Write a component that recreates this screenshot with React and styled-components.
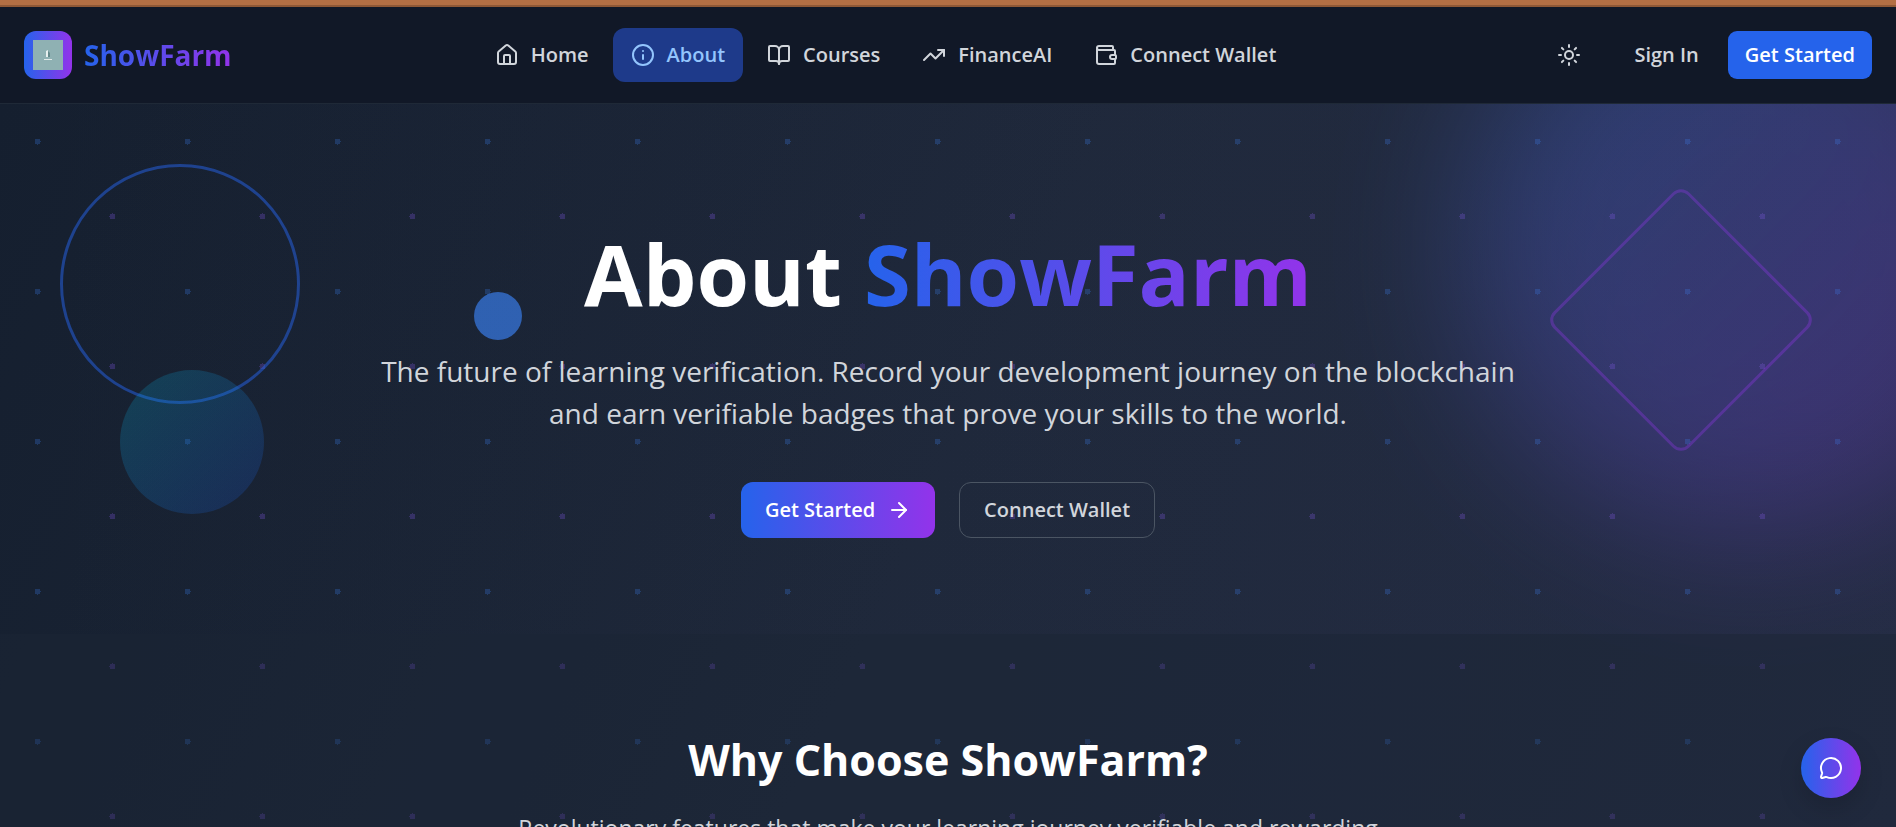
import React from 'react';
import styled, { createGlobalStyle } from 'styled-components';
import {
  ArrowRight,
  BookOpen,
  House,
  Info,
  MessageCircle,
  Sun,
  TrendingUp,
  Wallet,
} from 'lucide-react';

const GlobalStyle = createGlobalStyle`
  * {
    box-sizing: border-box;
  }
  body {
    margin: 0;
    background: #111827;
    color: #d1d5db;
    font-family: 'Segoe UI', 'Open Sans', 'Noto Sans', sans-serif;
    font-size: 20px;
    line-height: 28px;
  }
  button {
    font: inherit;
    cursor: pointer;
  }
`;

const links = [
  { label: 'Home', icon: House },
  { label: 'About', icon: Info, active: true },
  { label: 'Courses', icon: BookOpen },
  { label: 'FinanceAI', icon: TrendingUp },
  { label: 'Connect Wallet', icon: Wallet },
];

const App = () => (
  <Page>
    <GlobalStyle />
    <TopStrip />
    <Header>
      <Brand href="#home">
        <LogoBox>
          <svg width="30" height="30" viewBox="0 0 30 30" aria-hidden="true">
            <rect width="30" height="30" fill="#8fb1b3" />
            <path d="M13 17V11l2-1v7z" fill="#e8f0ef" />
            <path d="M15 11l2 2v4h-2z" fill="#64898b" />
            <path d="M11 19.5h8" stroke="#dfe9e8" strokeWidth="1" />
          </svg>
        </LogoBox>
        <BrandName>ShowFarm</BrandName>
      </Brand>
      <Nav>
        {links.map(({ label, icon: Icon, active }) => (
          <NavLink key={label} href="#" $active={active}>
            <Icon size={24} />
            {label}
          </NavLink>
        ))}
      </Nav>
      <Actions>
        <IconButton aria-label="Toggle theme">
          <Sun size={24} />
        </IconButton>
        <Auth>
          <AuthButton>Sign In</AuthButton>
          <AuthButton $primary>Get Started</AuthButton>
        </Auth>
      </Actions>
    </Header>
    <Main>
      <Backdrop aria-hidden="true">
        <Glow />
        <Dots />
        <Ring />
        <Disc />
        <Ball />
        <Diamond />
      </Backdrop>
      <Hero>
        <Title>
          About <GradientText>ShowFarm</GradientText>
        </Title>
        <Lead>
          The future of learning verification. Record your development journey
          on the blockchain and earn verifiable badges that prove your skills
          to the world.
        </Lead>
        <Buttons>
          <CtaButton $primary>
            Get Started
            <ArrowRight size={24} />
          </CtaButton>
          <CtaButton>Connect Wallet</CtaButton>
        </Buttons>
      </Hero>
      <Features>
        <h2>Why Choose ShowFarm?</h2>
        <p>
          Revolutionary features that make your learning journey verifiable and
          rewarding
        </p>
      </Features>
    </Main>
    <ChatButton aria-label="Open chat">
      <MessageCircle size={24} />
    </ChatButton>
  </Page>
);

const brandGradient = 'linear-gradient(to right, #2563eb, #9333ea)';

const Page = styled.div`
  display: flex;
  flex-direction: column;
  height: 100vh;
`;

const TopStrip = styled.div`
  flex: none;
  height: 7px;
  background: #b36f44;
  border-bottom: 2px solid #8f5836;
`;

const Header = styled.header`
  flex: none;
  display: flex;
  align-items: center;
  justify-content: space-between;
  padding: 21px 24px;
  background: #111827;
  border-bottom: 1px solid #1f2937;
  font-weight: 600;
`;

const Brand = styled.a`
  display: flex;
  align-items: center;
  gap: 12px;
  text-decoration: none;
`;

const LogoBox = styled.span`
  display: flex;
  align-items: center;
  justify-content: center;
  width: 48px;
  height: 48px;
  border-radius: 12px;
  background: ${brandGradient};
`;

const GradientText = styled.span`
  background: ${brandGradient};
  background-clip: text;
  -webkit-background-clip: text;
  color: transparent;
`;

const BrandName = styled(GradientText)`
  font-size: 28px;
  font-weight: 700;
  line-height: 40px;
`;

const Nav = styled.nav`
  display: flex;
  gap: 6px;
`;

const NavLink = styled.a`
  display: flex;
  align-items: center;
  gap: 12px;
  padding: 13px 18px;
  border-radius: 12px;
  text-decoration: none;
  color: ${({ $active }) => ($active ? '#93c5fd' : '#d1d5db')};
  background: ${({ $active }) => ($active ? '#1e3a8a' : 'transparent')};
`;

const Actions = styled.div`
  display: flex;
  align-items: center;
  gap: 18px;
`;

const Auth = styled.div`
  display: flex;
  gap: 12px;
`;

const IconButton = styled.button`
  display: flex;
  padding: 12px 18px;
  border: none;
  background: none;
  color: #d1d5db;
`;

const AuthButton = styled.button`
  padding: 10px 17px;
  border: none;
  border-radius: 9px;
  color: ${({ $primary }) => ($primary ? '#fff' : '#d1d5db')};
  background: ${({ $primary }) => ($primary ? '#2563eb' : 'transparent')};
`;

const Main = styled.main`
  position: relative;
  flex: 1;
  overflow-x: hidden;
  overflow-y: auto;
  scrollbar-width: none;
  background: linear-gradient(115deg, #151f2f, #1d2738 50%, #212a3f);
`;

const Backdrop = styled.div`
  position: absolute;
  inset: 0;
  overflow: hidden;
`;

const Glow = styled.div`
  position: absolute;
  top: -144px;
  right: -144px;
  width: 576px;
  height: 576px;
  border-radius: 50%;
  background: linear-gradient(135deg, #3b82f6, #9333ea);
  opacity: 0.28;
  filter: blur(72px);
`;

const Dots = styled.div`
  position: absolute;
  inset: 0;
  opacity: 0.25;
  background-image: radial-gradient(circle at 25% 25%, #3b82f6 3px, transparent 3px),
    radial-gradient(circle at 75% 75%, #8b5cf6 3px, transparent 3px);
  background-size: 150px 150px;
`;

const Ring = styled.div`
  position: absolute;
  top: 60px;
  left: 60px;
  width: 240px;
  height: 240px;
  border: 3px solid #2563eb;
  border-radius: 50%;
  opacity: 0.5;
`;

const Disc = styled.div`
  position: absolute;
  top: 266px;
  left: 120px;
  width: 144px;
  height: 144px;
  border-radius: 50%;
  background: linear-gradient(135deg, #06b6d4, #1d4ed8);
  opacity: 0.22;
`;

const Ball = styled.div`
  position: absolute;
  top: 188px;
  left: 25%;
  width: 48px;
  height: 48px;
  border-radius: 50%;
  background: #3b82f6;
  opacity: 0.65;
`;

const Diamond = styled.div`
  position: absolute;
  top: 120px;
  right: 119px;
  width: 192px;
  height: 192px;
  border: 3px solid #9333ea;
  border-radius: 12px;
  opacity: 0.35;
  transform: rotate(45deg);
`;

const Hero = styled.section`
  position: relative;
  display: flex;
  flex-direction: column;
  align-items: center;
  padding: 120px 24px 96px;
  text-align: center;
  background: linear-gradient(to right, transparent, rgba(99, 90, 160, 0.06));
`;

const Title = styled.h1`
  margin: 0;
  color: #fff;
  font-size: 85px;
  font-weight: 700;
  line-height: 98px;
`;

const Lead = styled.p`
  max-width: 1180px;
  margin: 28px 0 48px;
  font-size: 28px;
  line-height: 42px;
`;

const Buttons = styled.div`
  display: flex;
  gap: 24px;
`;

const CtaButton = styled.button`
  display: flex;
  align-items: center;
  gap: 12px;
  padding: ${({ $primary }) => ($primary ? '14px 24px' : '13px 24px')};
  border: ${({ $primary }) => ($primary ? 'none' : '1px solid #4b5563')};
  border-radius: 12px;
  font-weight: 600;
  color: ${({ $primary }) => ($primary ? '#fff' : '#d1d5db')};
  background: ${({ $primary }) => ($primary ? brandGradient : 'transparent')};
`;

const Features = styled.section`
  position: relative;
  padding: 96px 24px;
  text-align: center;
  background: rgba(31, 41, 55, 0.3);
  h2 {
    margin: 0 0 20px;
    color: #fff;
    font-size: 43px;
    font-weight: 700;
    line-height: 60px;
  }
  p {
    margin: 0;
    font-size: 23px;
    line-height: 36px;
  }
`;

const ChatButton = styled.button`
  position: fixed;
  right: 35px;
  bottom: 29px;
  display: flex;
  align-items: center;
  justify-content: center;
  width: 60px;
  height: 60px;
  border: none;
  border-radius: 50%;
  color: #fff;
  background: ${brandGradient};
  box-shadow: 0 10px 24px rgba(0, 0, 0, 0.15);
`;

export default App;
